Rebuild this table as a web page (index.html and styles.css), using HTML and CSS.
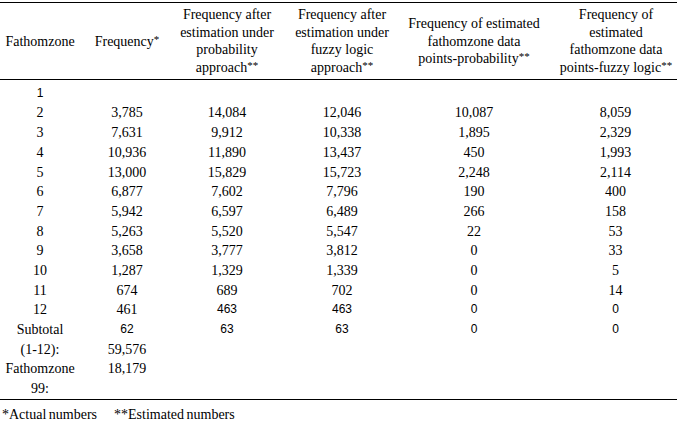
FILE: index.html
```html
<!DOCTYPE html>
<html>
<head>
<meta charset="utf-8">
<link rel="stylesheet" href="styles.css">
</head>
<body>
<table class="data">
  <colgroup>
    <col class="c1"><col class="c2"><col class="c3"><col class="c4"><col class="c5"><col class="c6">
  </colgroup>
  <thead>
    <tr>
      <th>Fathomzone</th>
      <th>Frequency<span class="star">*</span></th>
      <th>Frequency after<br>estimation under<br>probability<br>approach<span class="star">**</span></th>
      <th>Frequency after<br>estimation under<br>fuzzy logic<br>approach<span class="star">**</span></th>
      <th>Frequency of estimated<br>fathomzone data<br>points-probability<span class="star">**</span></th>
      <th class="last">Frequency of<br>estimated<br>fathomzone data<br>points-fuzzy logic<span class="star">**</span></th>
    </tr>
  </thead>
  <tbody>
    <tr class="first"><td class="s">1</td><td></td><td></td><td></td><td></td><td class="last"></td></tr>
    <tr><td>2</td><td>3,785</td><td>14,084</td><td>12,046</td><td>10,087</td><td class="last">8,059</td></tr>
    <tr><td>3</td><td>7,631</td><td>9,912</td><td>10,338</td><td>1,895</td><td class="last">2,329</td></tr>
    <tr><td>4</td><td>10,936</td><td>11,890</td><td>13,437</td><td>450</td><td class="last">1,993</td></tr>
    <tr><td>5</td><td>13,000</td><td>15,829</td><td>15,723</td><td>2,248</td><td class="last">2,114</td></tr>
    <tr><td>6</td><td>6,877</td><td>7,602</td><td>7,796</td><td>190</td><td class="last">400</td></tr>
    <tr><td>7</td><td>5,942</td><td>6,597</td><td>6,489</td><td>266</td><td class="last">158</td></tr>
    <tr><td>8</td><td>5,263</td><td>5,520</td><td>5,547</td><td>22</td><td class="last">53</td></tr>
    <tr><td>9</td><td>3,658</td><td>3,777</td><td>3,812</td><td>0</td><td class="last">33</td></tr>
    <tr><td>10</td><td>1,287</td><td>1,329</td><td>1,339</td><td>0</td><td class="last">5</td></tr>
    <tr><td>11</td><td>674</td><td>689</td><td>702</td><td>0</td><td class="last">14</td></tr>
    <tr><td>12</td><td>461</td><td class="s">463</td><td class="s">463</td><td class="s">0</td><td class="last s">0</td></tr>
    <tr><td>Subtotal</td><td class="s">62</td><td class="s">63</td><td class="s">63</td><td class="s">0</td><td class="last s">0</td></tr>
    <tr><td>(1-12):</td><td>59,576</td><td></td><td></td><td></td><td class="last"></td></tr>
    <tr><td>Fathomzone</td><td>18,179</td><td></td><td></td><td></td><td class="last"></td></tr>
    <tr class="end"><td>99:</td><td></td><td></td><td></td><td></td><td class="last"></td></tr>
  </tbody>
</table>
<p class="notes"><span class="note">*Actual numbers</span><span class="note">**Estimated numbers</span></p>
</body>
</html>
```

FILE: styles.css
```css
html, body {
  margin: 0;
  padding: 0;
  background: #ffffff;
}

body {
  font-family: "Liberation Serif", "Times New Roman", serif;
  font-size: 14px;
  color: #000000;
}

.data {
  width: 677px;
  margin-top: 2px;
  border-collapse: collapse;
  table-layout: fixed;
}

.c1 { width: 80px; }
.c2 { width: 94px; }
.c3 { width: 106px; }
.c4 { width: 124px; }
.c5 { width: 140px; }
.c6 { width: 133px; }

.data thead th {
  font-weight: normal;
  text-align: center;
  vertical-align: middle;
  line-height: 17.7px;
  padding: 3px 0 2px 0;
  border-top: 1px solid #000;
  border-bottom: 1px solid #000;
}

.data .last {
  padding-left: 11px;
}

.star {
  font-size: 11px;
  vertical-align: 3px;
  line-height: 0;
}

.data tbody td {
  text-align: center;
  vertical-align: middle;
  height: 19.67px;
  line-height: 19.67px;
  padding-top: 0;
  padding-bottom: 0;
  white-space: nowrap;
}

.data tbody tr.first td {
  padding-top: 4px;
}

.data tbody tr.end td {
  border-bottom: 1px solid #000;
}

.data td.s {
  font-family: "Liberation Sans", Arial, sans-serif;
  font-size: 12px;
}

.notes {
  margin: 7px 0 0 2px;
  font-size: 14px;
  line-height: 16px;
  word-spacing: -1px;
}

.note + .note {
  margin-left: 17px;
}
```
